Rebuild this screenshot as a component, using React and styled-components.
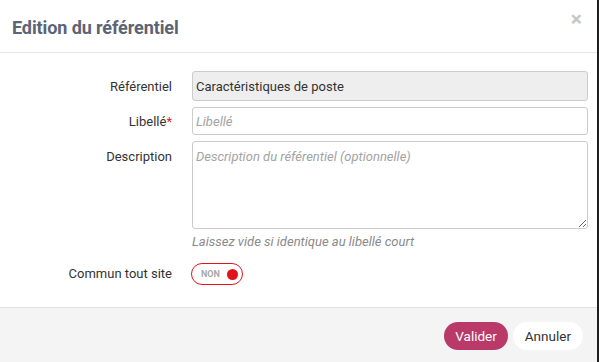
import React from 'react';
import styled, { createGlobalStyle } from 'styled-components';

const GlobalStyle = createGlobalStyle`
  html, body {
    margin: 0;
    padding: 0;
    background: #fff;
    font-family: Roboto, "Liberation Sans", sans-serif;
  }
`

const Modal = styled.div`
  width: 597px;
  height: 362px;
  border-right: 2px solid #1e1e1e;
  display: flex;
  flex-direction: column;
  background: #fff;
`

const Header = styled.div`
  height: 53px;
  box-sizing: border-box;
  border-bottom: 1px solid #e5e5e5;
  display: flex;
  align-items: center;
  justify-content: space-between;
  padding: 2px 15px 0 12px;
`

const Title = styled.h4`
  margin: 0;
  font-size: 18px;
  font-weight: 700;
  color: #5b6375;
  letter-spacing: -0.1px;
`

const Close = styled.span`
  align-self: flex-start;
  margin-top: 7px;
  font-size: 21px;
  font-weight: 700;
  color: #c6c6c6;
  line-height: 1;
`

const Body = styled.div`
  padding: 18px 9px 0 0;
  display: flex;
  flex-direction: column;
  gap: 6px;
  flex: 1;
`

const Row = styled.div`
  display: grid;
  grid-template-columns: 172px 1fr;
  column-gap: 20px;
  align-items: ${p => (p.$top ? 'start' : 'center')};
`

const Label = styled.label`
  text-align: right;
  font-size: 13px;
  color: #333;
  padding-top: ${p => p.$offset || 0}px;
`

const Star = styled.span`
  color: #d9262b;
`

const Input = styled.input`
  box-sizing: border-box;
  width: 100%;
  height: ${p => (p.$tall ? '30px' : '28px')};
  border: 1px solid #ccc;
  border-radius: 3px;
  padding: 0 4px 0 3px;
  font-family: Roboto, "Liberation Sans", sans-serif;
  font-size: 13px;
  color: #333;
  background: ${p => (p.disabled ? '#eeeeee' : '#fff')};
  outline: none;
  &::placeholder {
    color: #a3a3a3;
    font-style: italic;
  }
`

const TextArea = styled.textarea`
  box-sizing: border-box;
  width: 100%;
  height: 88px;
  border: 1px solid #ccc;
  border-radius: 3px;
  padding: 7px 3px;
  font-family: Roboto, "Liberation Sans", sans-serif;
  font-size: 13px;
  color: #333;
  resize: vertical;
  outline: none;
  &::placeholder {
    color: #a3a3a3;
    font-style: italic;
  }
`

const Help = styled.div`
  font-size: 13px;
  font-style: italic;
  color: #8a8a8a;
  margin-top: 1px;
`

const Toggle = styled.div`
  box-sizing: border-box;
  width: 52px;
  height: 22px;
  border: 1.5px solid #e0151c;
  border-radius: 11px;
  display: flex;
  align-items: center;
  justify-content: space-between;
  padding: 0 4px 0 9px;
  margin: 8px 0 0 -1px;
`

const ToggleText = styled.span`
  font-size: 9px;
  font-weight: 700;
  color: #a8a8a8;
`

const Knob = styled.span`
  width: 11px;
  height: 11px;
  border-radius: 50%;
  background: #e0151c;
`

const Footer = styled.div`
  border-top: 1px solid #e2e2e2;
  background: #f4f4f4;
  height: 55px;
  box-sizing: border-box;
  display: flex;
  justify-content: flex-end;
  align-items: flex-start;
  gap: 5px;
  padding: 14px 14px 0 0;
`

const Button = styled.button`
  height: 28px;
  border: none;
  border-radius: 14px;
  padding: 0 12px;
  font-family: Roboto, "Liberation Sans", sans-serif;
  font-size: 13.5px;
  color: ${p => (p.$primary ? '#fff' : '#333')};
  background: ${p => (p.$primary ? '#b93a68' : '#fff')};
  ${p => p.$primary && 'padding: 0 11px;'}
`

export default function App() {
  return (
    <>
      <GlobalStyle />
      <Modal>
        <Header>
          <Title>Edition du référentiel</Title>
          <Close>×</Close>
        </Header>
        <Body>
          <Row>
            <Label>Référentiel</Label>
            <Input $tall disabled value="Caractéristiques de poste" readOnly />
          </Row>
          <Row>
            <Label>Libellé<Star>*</Star></Label>
            <Input placeholder="Libellé" />
          </Row>
          <Row $top>
            <Label $offset={8}>Description</Label>
            <div>
              <TextArea placeholder="Description du référentiel (optionnelle)" />
              <Help>Laissez vide si identique au libellé court</Help>
            </div>
          </Row>
          <Row $top>
            <Label $offset={11}>Commun tout site</Label>
            <Toggle>
              <ToggleText>NON</ToggleText>
              <Knob />
            </Toggle>
          </Row>
        </Body>
        <Footer>
          <Button $primary>Valider</Button>
          <Button>Annuler</Button>
        </Footer>
      </Modal>
    </>
  );
}
